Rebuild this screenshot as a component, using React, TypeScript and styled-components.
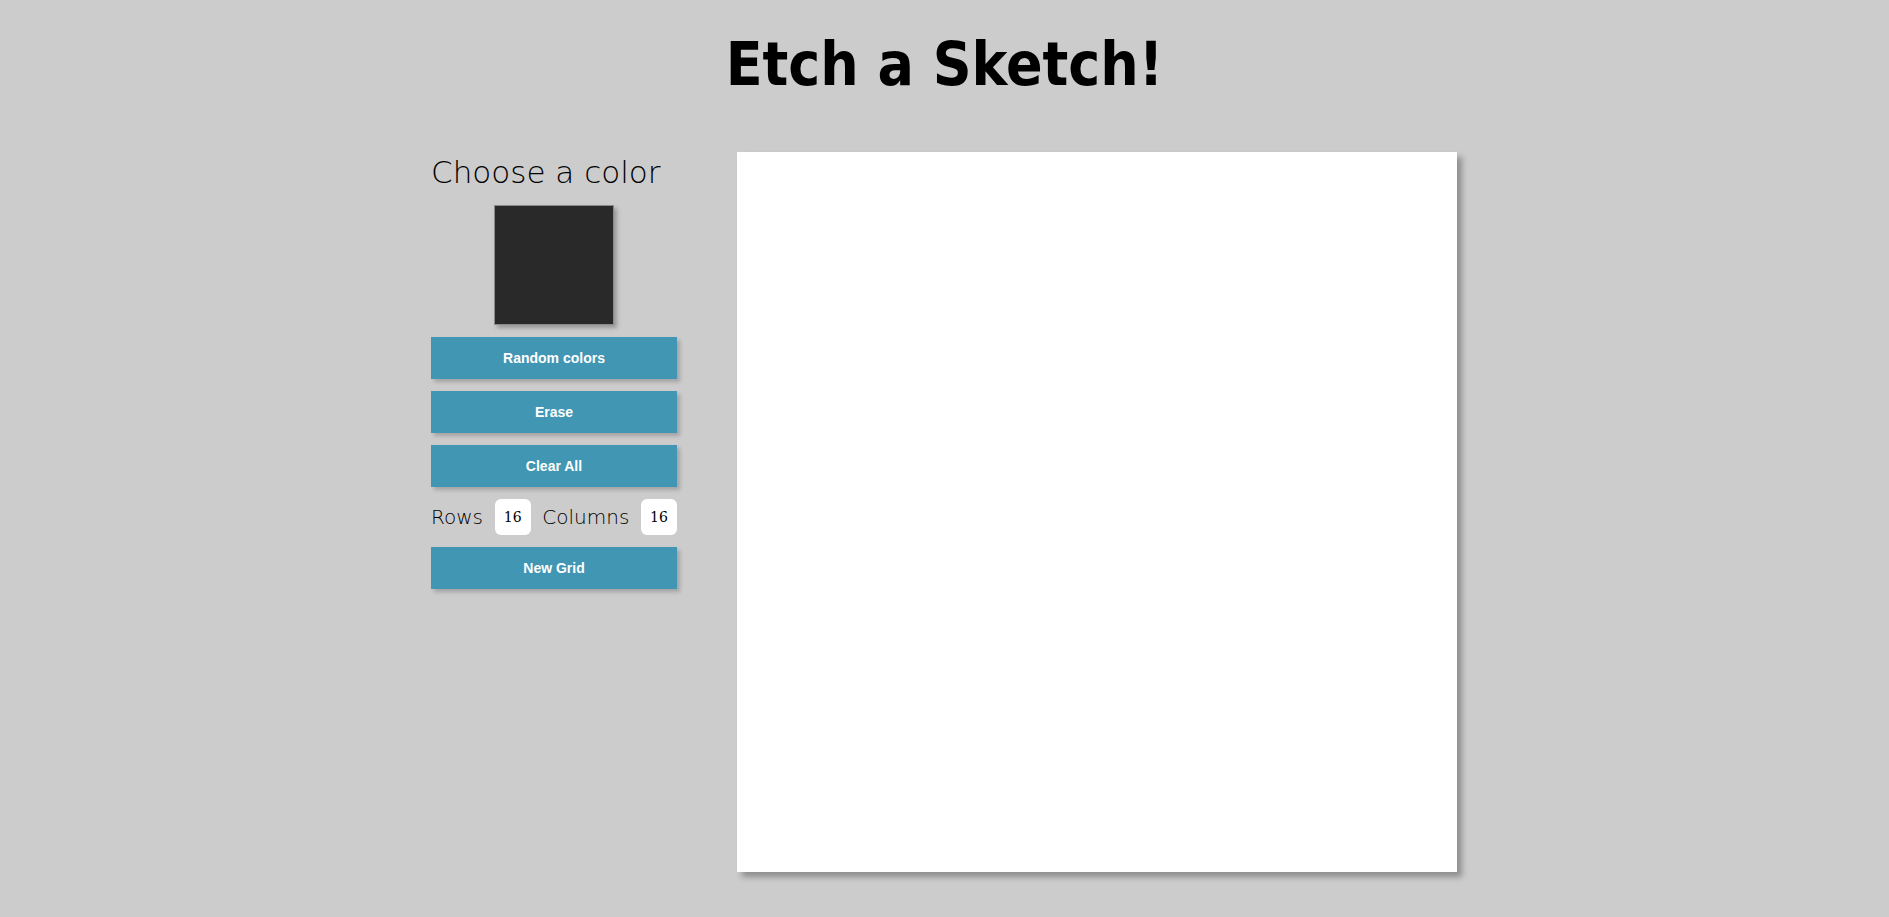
import styled, { createGlobalStyle } from "styled-components";
import { useState } from "react";

const GlobalStyle = createGlobalStyle`
  html, body {
    margin: 0;
    padding: 0;
    background: #cccccc;
    font-family: "Comic Sans MS", "DejaVu Sans", sans-serif;
  }
`;

const App = () => {
  const [color] = useState("#292929");
  const [rows, setRows] = useState("16");
  const [columns, setColumns] = useState("16");

  return (
    <Page>
      <GlobalStyle />
      <Title>Etch a Sketch!</Title>
      <Main>
        <Sidebar>
          <Heading>Choose a color</Heading>
          <Swatch style={{ background: color }} />
          <Button>Random colors</Button>
          <Button>Erase</Button>
          <Button>Clear All</Button>
          <SizeRow>
            <Label>Rows</Label>
            <NumberInput value={rows} onChange={(e) => setRows(e.target.value)} />
            <Label>Columns</Label>
            <NumberInput
              value={columns}
              onChange={(e) => setColumns(e.target.value)}
            />
          </SizeRow>
          <Button>New Grid</Button>
        </Sidebar>
        <Pad />
      </Main>
    </Page>
  );
};

const Page = styled.div`
  width: 100%;
  min-height: 917px;
  display: flex;
  flex-direction: column;
  align-items: center;
`;

const Title = styled.h1`
  margin: 24px 0 0;
  height: 128px;
  font-family: "DejaVu Sans", sans-serif;
  font-stretch: condensed;
  font-size: 60px;
  font-weight: bold;
  line-height: 80px;
  color: #000;
`;

const Main = styled.div`
  display: flex;
  gap: 60px;
  align-items: flex-start;
  margin-left: -1px;
`;

const Sidebar = styled.div`
  width: 246px;
  display: flex;
  flex-direction: column;
  align-items: center;
  gap: 12px;
`;

const Heading = styled.div`
  align-self: stretch;
  font-family: "DejaVu Sans", sans-serif;
  font-weight: 200;
  font-size: 31px;
  line-height: 40px;
  color: #000;
  margin-bottom: 1px;
  white-space: nowrap;
`;

const Swatch = styled.div`
  width: 118px;
  height: 118px;
  border: 1px solid #8a8a8a;
  box-shadow: 3px 3px 4px rgba(0, 0, 0, 0.25);
`;

const Button = styled.button`
  align-self: stretch;
  height: 42px;
  border: none;
  background: #4196b4;
  color: #fff;
  font-family: "Liberation Sans", sans-serif;
  font-weight: bold;
  font-size: 14px;
  box-shadow: 3px 3px 4px rgba(0, 0, 0, 0.2);
  cursor: pointer;
`;

const SizeRow = styled.div`
  align-self: stretch;
  display: flex;
  align-items: center;
  justify-content: space-between;
`;

const Label = styled.span`
  font-family: "DejaVu Sans", sans-serif;
  font-weight: 200;
  font-size: 20px;
  color: #000;
`;

const NumberInput = styled.input`
  width: 36px;
  height: 36px;
  box-sizing: border-box;
  border: none;
  border-radius: 6px;
  background: #fff;
  text-align: center;
  font-family: "DejaVu Serif", serif;
  font-size: 14px;
  color: #000;
  padding: 0;
  outline: none;
`;

const Pad = styled.div`
  width: 720px;
  height: 720px;
  background: #fff;
  box-shadow: 5px 5px 6px rgba(0, 0, 0, 0.3);
`;

export default App;
